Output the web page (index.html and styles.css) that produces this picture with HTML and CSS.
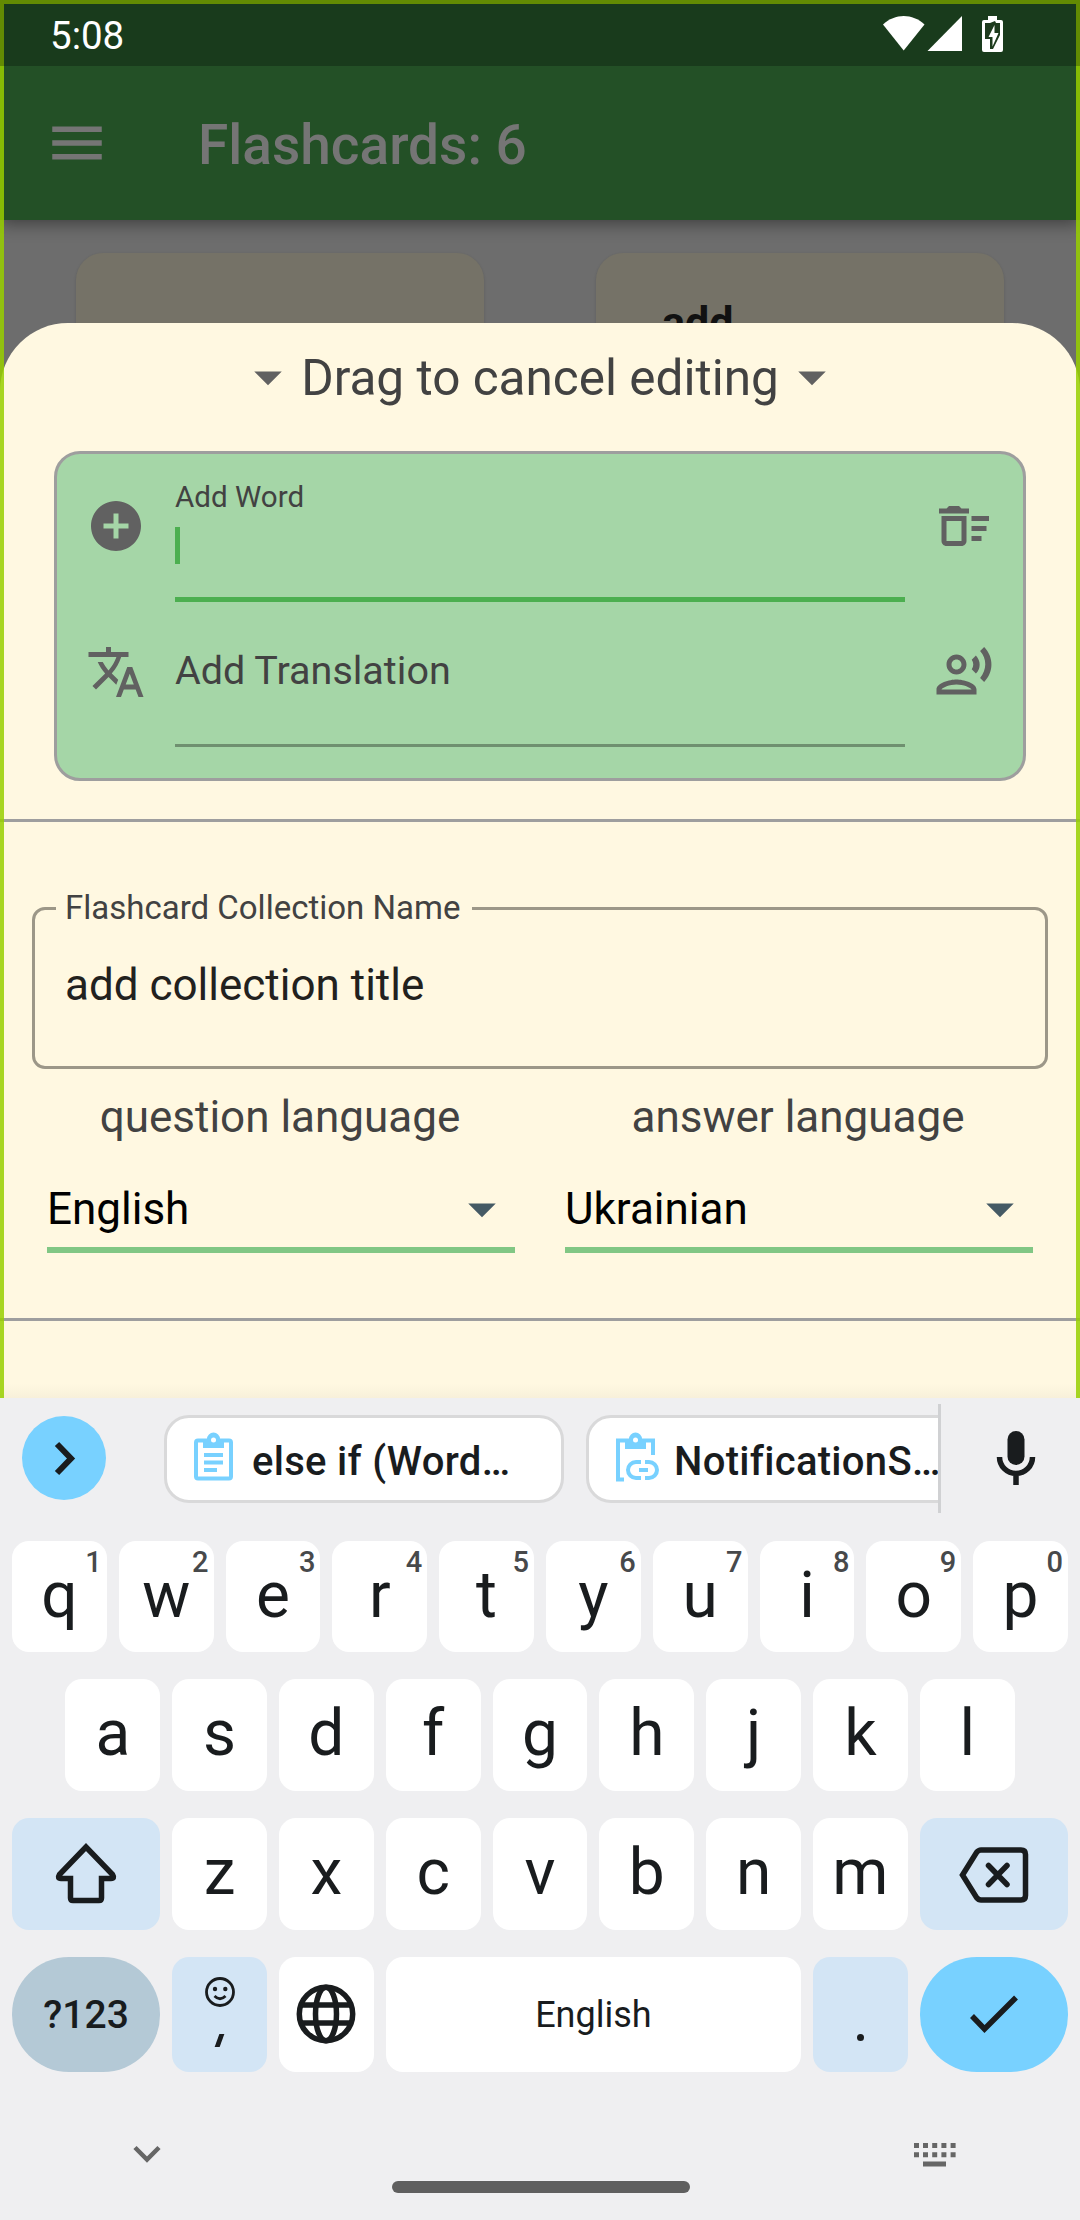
FILE: index.html
```html
<!DOCTYPE html>
<html lang="en">
<head>
<meta charset="utf-8">
<title>Flashcards</title>
<link rel="stylesheet" href="styles.css">
</head>
<body>
<div class="screen">
  <main class="app">
    <header class="appbar">
      <svg class="icon66" viewBox="0 0 24 24"><path d="M3 18h18v-2H3v2zm0-5h18v-2H3v2zm0-7v2h18V6H3z"/></svg>
      <h1 class="appbar-title">Flashcards: 6</h1>
    </header>
    <div class="cards">
      <div class="card"></div>
      <div class="card">add</div>
    </div>

    <section class="sheet">
      <div class="drag">
        <svg class="icon66" viewBox="0 0 24 24"><path d="M7 10l5 5 5-5z"/></svg>
        <span class="drag-text">Drag to cancel editing</span>
        <svg class="icon66" viewBox="0 0 24 24"><path d="M7 10l5 5 5-5z"/></svg>
      </div>

      <div class="word-box">
        <div class="word-row">
          <svg class="icon60" viewBox="0 0 24 24"><path d="M12 2C6.48 2 2 6.48 2 12s4.48 10 10 10 10-4.48 10-10S17.52 2 12 2zm5 11h-4v4h-2v-4H7v-2h4V7h2v4h4v2z"/></svg>
          <div class="field field-active">
            <label class="label-small">Add Word</label>
            <span class="caret"></span>
          </div>
          <svg class="icon60" viewBox="0 0 24 24"><path d="M15 16h4v2h-4zm0-8h7v2h-7zm0 4h6v2h-6zM3 18c0 1.1.9 2 2 2h6c1.1 0 2-.9 2-2V8H3v10zm2-8h6v8H5v-8zm5-6H6L5 5H2v2h12V5h-3z"/></svg>
        </div>
        <div class="word-row word-row-second">
          <svg class="icon60" viewBox="0 0 24 24"><path d="M12.87 15.07l-2.54-2.51.03-.03c1.74-1.94 2.98-4.17 3.71-6.53H17V4h-7V2H8v2H1v1.99h11.17C11.5 7.92 10.44 9.75 9 11.35 8.07 10.32 7.3 9.19 6.69 8h-2c.73 1.63 1.73 3.17 2.98 4.56l-5.09 5.02L4 19l5-5 3.11 3.11.76-2.04zM18.5 10h-2L12 22h2l1.12-3h4.75L21 22h2l-4.5-12zm-2.62 7l1.62-4.33L19.12 17h-3.24z"/></svg>
          <div class="field">
            <label class="label-large">Add Translation</label>
          </div>
          <svg class="icon60" viewBox="0 0 24 24"><path d="M9 13c2.21 0 4-1.79 4-4s-1.79-4-4-4-4 1.790-4 4 1.790 4 4 4zm0-6c1.100 0 2 .9 2 2s-.9 2-2 2-2-.9-2-2 .9-2 2-2zm0 8c-2.670 0-8 1.340-8 4v2h16v-2c0-2.660-5.330-4-8-4zm-6 4c.22-.72 3.310-2 6-2 2.700 0 5.800 1.290 6 2H3zM15.080 7.050c.84 1.180.84 2.710 0 3.890l1.680 1.690c2.020-2.020 2.020-5.070 0-7.270l-1.680 1.690zM20.070 2l-1.630 1.630c2.770 3.020 2.770 7.560 0 10.740L20.070 16c3.900-3.890 3.910-9.950 0-14z"/></svg>
        </div>
      </div>

      <div class="divider"></div>

      <fieldset class="name-box">
        <legend>Flashcard Collection Name</legend>
        <div class="name-value">add collection title</div>
      </fieldset>

      <div class="languages">
        <div class="language">
          <div class="language-label">question language</div>
          <div class="select">
            <span>English</span>
            <svg class="icon66" viewBox="0 0 24 24"><path d="M7 10l5 5 5-5z"/></svg>
          </div>
        </div>
        <div class="language">
          <div class="language-label">answer language</div>
          <div class="select">
            <span>Ukrainian</span>
            <svg class="icon66" viewBox="0 0 24 24"><path d="M7 10l5 5 5-5z"/></svg>
          </div>
        </div>
      </div>

      <div class="divider"></div>
    </section>

    <div class="glow"></div>
    <div class="statusbar">
      <span class="time">5:08</span>
      <svg class="status-icons" viewBox="0 0 122 38">
        <path d="M0 9.500C12 -2 29.500 -2 41.500 9.500L20.700 35.500Z"/>
        <path d="M79 1V36H44.500Z"/>
        <path d="M105 1h9v4h4q2 0 2 2v28q0 2-2 2h-17q-2 0-2-2V7q0-2 2-2h4z"/>
        <path class="bolt-cut" d="M102 8h5l5-2 1 2h4v12l-7 14h-3v-10h-5z"/>
        <path d="M111.500 10v8h4l-6 13.500v-9.500h-4z"/>
      </svg>
    </div>
  </main>

  <section class="keyboard">
    <div class="strip">
      <span class="expand"><svg viewBox="0 0 84 84"><path d="M35 28L49 42.500L35 57"/></svg></span>
      <div class="chips">
        <div class="chip chip-first">
          <svg class="clip" viewBox="0 0 46 50"><rect x="4" y="6.500" width="35" height="38" rx="2"/><path class="solid" d="M11 5h4a6.500 6.500 0 0 1 13 0h4v9H11z"/><circle class="hole" cx="21.500" cy="6" r="2.500"/><path d="M12 21h19M12 28.500h19M12 36h13"/></svg>
          <span>else if (Word…</span>
        </div>
        <div class="chip chip-second">
          <svg class="clip" viewBox="0 0 46 50"><path d="M10 45.500H4V6.500H39V21"/><path class="solid" d="M11 5h4a6.500 6.500 0 0 1 13 0h4v10H11z"/><circle class="hole" cx="21.500" cy="6" r="2.500"/><path d="M27 28h-5a8 8 0 0 0 0 16h5M31 28h4a8 8 0 0 1 0 16h-4M25 36h9"/></svg>
          <span>NotificationS…</span>
        </div>
      </div>
      <svg class="mic" viewBox="0 0 38 54"><rect x="10.500" y="0" width="17" height="34" rx="8.500"/><path d="M2.500 26a16.500 16.500 0 0 0 33 0M19 42v12"/></svg>
    </div>

    <div class="row row-top">
      <div class="key">q<sup>1</sup></div><div class="key">w<sup>2</sup></div><div class="key">e<sup>3</sup></div><div class="key">r<sup>4</sup></div><div class="key">t<sup>5</sup></div><div class="key">y<sup>6</sup></div><div class="key">u<sup>7</sup></div><div class="key">i<sup>8</sup></div><div class="key">o<sup>9</sup></div><div class="key">p<sup>0</sup></div>
    </div>
    <div class="row row-home">
      <div class="key">a</div><div class="key">s</div><div class="key">d</div><div class="key">f</div><div class="key">g</div><div class="key">h</div><div class="key">j</div><div class="key">k</div><div class="key">l</div>
    </div>
    <div class="row">
      <div class="key key-wide key-soft"><svg class="shift" viewBox="0 0 62 60"><path d="M31 4L4.500 31.500Q2 35.500 6 35.500H15.500V55Q15.500 57.500 18 57.500H44Q46.500 57.500 46.500 55V35.500H56Q60 35.500 57.500 31.500Z"/></svg></div>
      <div class="key">z</div><div class="key">x</div><div class="key">c</div><div class="key">v</div><div class="key">b</div><div class="key">n</div><div class="key">m</div>
      <div class="key key-wide key-soft"><svg class="backspace" viewBox="0 0 70 56"><path d="M3.500 28L17.500 5.500Q19.500 3 22 3H62Q66.500 3 66.500 7.500V48.500Q66.500 53 62 53H22Q19.500 53 17.500 50.500Z"/><path class="cross" d="M29.500 18.500L48 37.500M48 18.500L29.500 37.500"/></svg></div>
    </div>
    <div class="row row-bottom">
      <div class="key key-wide key-symbols">?123</div>
      <div class="key key-soft key-comma"><svg class="smile" viewBox="0 0 30 30"><circle class="ring" cx="15" cy="15" r="13.500"/><circle cx="10" cy="12" r="2.200"/><circle cx="20.300" cy="12" r="2.200"/><path class="ring" d="M9.500 19q5.500 5.500 11 0"/></svg><i class="comma"></i></div>
      <div class="key"><svg class="globe" viewBox="0 0 60 60"><circle cx="30" cy="30" r="26.700"/><ellipse cx="30" cy="30" rx="10.500" ry="26.700"/><path d="M5 21H55M5 39H55"/></svg></div>
      <div class="key key-space">English</div>
      <div class="key key-soft key-period"><i class="dot"></i></div>
      <div class="key key-wide key-enter"><svg class="check" viewBox="0 0 48 38"><path d="M2 21L14.500 34L46 2.500"/></svg></div>
    </div>

    <div class="navbar">
      <svg class="collapse" viewBox="0 0 28 18"><path d="M2 2.500L14 14.500L26 2.500"/></svg>
      <span class="pill"></span>
      <svg class="switch" viewBox="0 0 42 24"><path d="M0 0h5v5H0zM9 0h5v5H9zM18.200 0h5v5h-5zM27.400 0h5v5h-5zM36.600 0h5v5h-5zM0 9.300h5v5H0zM9 9.300h5v5H9zM18.200 9.300h5v5h-5zM27.400 9.300h5v5h-5zM36.600 9.300h5v5h-5zM9 18.500h23v5H9z"/></svg>
    </div>
  </section>
</div>
</body>
</html>
```
FILE: styles.css
```css
* { box-sizing: border-box; }

body {
  margin: 0;
  font-family: Roboto, "Noto Sans", sans-serif;
  background: #efeff1;
}

svg { display: block; flex: none; overflow: visible; }

.screen { width: 1080px; height: 2220px; overflow: hidden; }

.icon66 { width: 66px; height: 66px; }
.icon60 { width: 60px; height: 60px; fill: #616161; }

/* Dimmed page behind the sheet */
.app {
  position: relative;
  height: 1398px;
  overflow: hidden;
  background: #6d6d6d;
}

.appbar {
  display: flex;
  align-items: center;
  height: 220px;
  padding: 66px 0 0 44px;
  background: #235026;
  box-shadow: 0 4px 16px rgba(0, 0, 0, .42);
  fill: #757575;
}

.appbar-title {
  margin: 4px 0 0 88px;
  color: #757575;
  font-size: 55px;
  font-weight: 500;
  line-height: 64px;
}

.cards { display: flex; gap: 112px; padding: 33px 76px 0; }

.card {
  flex: 1;
  height: 200px;
  padding: 41px 66px;
  border-radius: 27px;
  background: #757267;
  box-shadow: 0 1px 3px rgba(0, 0, 0, .15);
  color: #111;
  font-size: 43px;
  font-weight: 700;
  line-height: 56px;
}

/* Status bar scrim and edge glow lie over everything in the app */
.glow {
  position: absolute;
  inset: 0;
  border: 4px solid rgba(152, 207, 0, .85);
  border-bottom: 0;
}

.statusbar {
  position: absolute;
  inset: 0 0 auto;
  display: flex;
  justify-content: space-between;
  height: 66px;
  padding: 15px 75px 0 50px;
  background: rgba(0, 0, 0, .26);
  color: #fff;
}

.time { font-size: 38.5px; line-height: 41px; }
.status-icons { width: 122px; height: 38px; fill: #fff; }
.bolt-cut { fill: #1d3b1d; }

/* Editing sheet */
.sheet {
  position: absolute;
  inset: 323px 0 0;
  padding-top: 21px;
  border-radius: 68px 68px 0 0;
  background: linear-gradient(#fff8e1 1061px, #f8f0da);
  color: #424242;
}

.drag {
  display: flex;
  justify-content: center;
  height: 67px;
  fill: #616161;
}

.drag-text { padding-top: 1px; font-size: 49.5px; line-height: 66px; }

.word-box {
  height: 330px;
  margin: 40px 54px 38px;
  border: 3px solid #9e9e9e;
  border-radius: 26px;
  background: #a5d6a7;
}

.word-row {
  display: grid;
  grid-template-columns: 60px 730px 60px;
  column-gap: 29px;
  height: 148px;
  padding: 42px 0 0 29px;
}

.word-row-second { height: 145px; padding-top: 40px; }

.field {
  height: 105px;
  border-bottom: 3px solid #6f9070;
}

.field-active {
  height: 122px;
  margin-top: -16px;
  border-bottom: 5px solid #4caf50;
}

.label-small {
  display: block;
  font-size: 29.6px;
  line-height: 34px;
}

.label-large {
  display: block;
  padding-top: 6px;
  font-size: 39.5px;
  line-height: 45px;
}

.caret {
  display: block;
  width: 5px;
  height: 37px;
  margin-top: 13px;
  background: #4caf50;
}

.divider { height: 3px; background: #9e9e9e; }

.name-box {
  height: 181px;
  margin: 66px 32px 0;
  padding: 31px 21px 0;
  border: 3px solid #9c9788;
  border-radius: 13px;
}

.name-box legend {
  padding: 0 12px 0 9px;
  font-size: 33px;
  line-height: 40px;
}

.name-value {
  padding-left: 9px;
  color: #22211e;
  font-size: 44px;
  line-height: 52px;
}

.languages {
  display: grid;
  grid-template-columns: 468px 468px;
  gap: 50px;
  margin: 22px 47px 65px;
}

.language-label {
  padding-right: 2px;
  font-size: 44px;
  line-height: 52px;
  text-align: center;
}

.select {
  display: flex;
  align-items: center;
  justify-content: space-between;
  height: 77px;
  margin-top: 33px;
  padding-bottom: 5px;
  border-bottom: 6px solid #81c784;
  color: #000;
  fill: #455a64;
  font-size: 44px;
  line-height: 52px;
}

/* Keyboard */
.keyboard { height: 822px; background: #efeff1; color: #191c1e; }

.strip {
  display: flex;
  align-items: flex-start;
  height: 143px;
  padding: 6px 45px 0 22px;
}

.expand {
  width: 84px;
  height: 84px;
  margin-top: 12px;
  border-radius: 50%;
  background: #78d1ff;
}

.expand path { fill: none; stroke: #191c1e; stroke-width: 6; }

.chips {
  display: flex;
  align-items: flex-start;
  gap: 22px;
  width: 777px;
  height: 109px;
  margin-left: 58px;
  padding-top: 11px;
  border-right: 3px solid #d0d1d3;
  overflow: hidden;
}

.chip {
  display: flex;
  flex: none;
  align-items: center;
  width: 400px;
  height: 88px;
  padding-left: 25px;
  border: 3px solid #d9d9da;
  border-radius: 25px;
  background: #fff;
  font-size: 40px;
  font-weight: 500;
  letter-spacing: .3px;
  line-height: 46px;
  white-space: nowrap;
}

.chip span { padding: 5px 0 0 14px; }
.clip { width: 46px; height: 50px; fill: none; stroke: #78d1ff; stroke-width: 4; }
.clip .solid { fill: #78d1ff; stroke: none; }
.clip .hole { fill: #fff; stroke: none; }

.mic { width: 38px; height: 54px; margin: 27px 0 0 auto; fill: #191c1e; }
.mic path { fill: none; stroke: #191c1e; stroke-width: 5.5px; }

.row { display: flex; gap: 12px; height: 112px; margin: 0 12px 27px; }
.row-top { height: 111px; }
.row-home { padding: 0 53.4px; }
.row-bottom { height: 115px; margin-bottom: 0; }

.key {
  position: relative;
  display: flex;
  flex: none;
  align-items: center;
  justify-content: center;
  width: 94.8px;
  padding-bottom: 2px;
  border-radius: 17px;
  background: #fff;
  font-size: 64px;
  line-height: 108px;
}

.key sup {
  position: absolute;
  top: 9px;
  right: 5px;
  color: #47494b;
  font-size: 29px;
  font-weight: 500;
  line-height: 24px;
}

.key-wide { width: 148.2px; }
.key-soft { background: #d3e5f5; }
.key-symbols { padding-bottom: 0; border-radius: 57px; background: #b4c9d6; font-size: 39px; font-weight: 500; }
.key-enter { border-radius: 57px; background: #78d1ff; }
.key-space { flex: 1; padding-bottom: 0; font-size: 36px; }

.shift { width: 62px; height: 60px; }
.backspace { width: 70px; height: 56px; margin-top: 3px; }
.globe { width: 60px; height: 60px; }
.check { width: 48px; height: 38px; }
.shift, .backspace, .globe, .check { fill: none; stroke: #191c1e; stroke-width: 5.5px; }
.backspace .cross { stroke-linecap: round; }

.key-comma { flex-direction: column; justify-content: flex-start; padding-top: 20px; }
.smile { width: 30px; height: 30px; fill: #191c1e; }
.smile .ring { fill: none; stroke: #191c1e; stroke-width: 2.8px; }
.comma { width: 5px; height: 13px; margin-top: 27px; background: #191c1e; transform: skewX(-20deg); }
.key-period { align-items: flex-start; padding-top: 77px; }
.dot { width: 7px; height: 7px; border-radius: 50%; background: #191c1e; }

.navbar {
  display: grid;
  grid-template-columns: 28px 298px 42px;
  justify-content: space-between;
  padding: 71px 124px 0 133px;
}

.collapse { width: 28px; height: 18px; margin-top: 2px; fill: none; stroke: #666; stroke-width: 4.5px; }
.switch { width: 42px; height: 24px; fill: #666; }
.pill { height: 12px; margin-top: 38px; margin-right: -3px; margin-left: 3px; border-radius: 6px; background: #5f5f5f; }
```
